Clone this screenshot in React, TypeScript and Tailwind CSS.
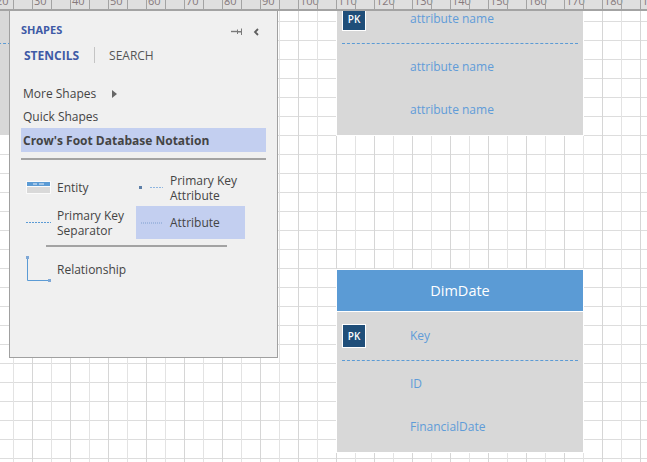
const rulerTicks = Array.from({ length: 36 }, (_, i) => i);

function Ruler() {
  return (
    <div className="absolute left-0 top-0 z-20 flex h-[11px] w-full overflow-hidden border-b-2 border-[#a3a3a3] bg-[#dfdfdf] pl-0">
      <div className="flex shrink-0 -ml-[6px]">
        {rulerTicks.map((i) => (
          <div key={i} className="relative h-[9px] w-[19px] shrink-0 border-l border-[#a3a3a3]">
            {i % 2 === 0 && (
              <span className="absolute -top-[6px] left-[1px] text-[11px] leading-[14px] text-[#86797c]">
                {20 + i * 5}
              </span>
            )}
          </div>
        ))}
      </div>
    </div>
  );
}

function PkBadge() {
  return (
    <div className="ml-[5px] flex h-[24px] w-[24px] items-center justify-center border border-white bg-[#1f4e79] text-[10px] font-semibold text-white">
      PK
    </div>
  );
}

interface EntityProps {
  className: string;
  title?: string;
  attrs: string[];
}

// one diagram node: optional header, key row, separator, then two attribute rows
function Entity({ className, title, attrs }: EntityProps) {
  return (
    <div className={`absolute w-[246px] ${className}`}>
      {title && (
        <div className="mb-[1px] flex h-[41px] items-center justify-center bg-[#5b9bd5] text-[14.5px] text-white ring-1 ring-white">
          {title}
        </div>
      )}
      <div className="bg-[#d8d8d8] pb-[5px] text-[12px] text-[#5f9cd8] ring-1 ring-white">
        <div className="flex h-[48px] items-center">
          <PkBadge />
          {attrs[0] && <span className="ml-[44px]">{attrs[0]}</span>}
        </div>
        <div className="mx-[5px] border-t border-dashed border-[#5b9bd5]" />
        <div className="flex h-[46px] items-center pl-[73px]">{attrs[1]}</div>
        <div className="flex h-[40px] items-center pl-[73px]">{attrs[2]}</div>
      </div>
    </div>
  );
}

function PinIcon() {
  return (
    <svg width="11" height="8" viewBox="0 0 11 8" className="text-[#7a7a7a]">
      <path d="M0 3.5h6" stroke="currentColor" strokeWidth="1.4" />
      <path d="M6 1.5h1V3h3V0.5h1v6.5h-1V4.5H7V6H6z" fill="currentColor" />
    </svg>
  );
}

function CollapseIcon() {
  return (
    <svg width="6" height="8" viewBox="0 0 6 8">
      <path d="M5 1L2 4l3 3" fill="none" stroke="#5f5f5f" strokeWidth="1.8" />
    </svg>
  );
}

function EntityIcon() {
  return (
    <svg width="25" height="13" viewBox="0 0 25 13">
      <rect x="0" y="0" width="25" height="13" rx="1" fill="#fbfbfb" />
      <rect x="1" y="1" width="23" height="4" fill="#5b9bd5" />
      <path d="M7 3h4M13 3h5" stroke="#e8eef8" strokeWidth="1" />
      <rect x="1" y="6" width="23" height="6" fill="#d9d9d9" />
    </svg>
  );
}

function PkAttrIcon() {
  return (
    <svg width="24" height="5" viewBox="0 0 24 5">
      <rect x="0" y="1" width="3" height="3" fill="#5d7fa8" />
      <path d="M11 2.5h13" stroke="#8fb6e0" strokeWidth="1" strokeDasharray="2 1" />
    </svg>
  );
}

function SeparatorIcon() {
  return (
    <svg width="25" height="3" viewBox="0 0 25 3">
      <path d="M0 1.5h25" stroke="#5b9bd5" strokeWidth="1" strokeDasharray="2 1" />
    </svg>
  );
}

function AttrIcon() {
  return (
    <svg width="22" height="4" viewBox="0 0 22 4">
      <path d="M0 2h22" stroke="#7f9fcf" strokeWidth="1" strokeDasharray="1 1" />
    </svg>
  );
}

function RelationshipIcon() {
  return (
    <svg width="25" height="26" viewBox="0 0 25 26">
      <path d="M1.5 1v23.5H24" fill="none" stroke="#5b9bd5" strokeWidth="1" />
      <rect x="0" y="0" width="3" height="3" fill="#7fa8d6" />
      <rect x="22" y="23" width="3" height="3" fill="#7fa8d6" />
    </svg>
  );
}

function ShapesPanel() {
  return (
    <div className="absolute left-[9px] top-[10px] z-10 h-[348px] w-[269px] border border-[#a0a0a0] bg-[#f0f0f0] px-[11px] text-[12px] leading-[15px] text-[#444444]">
      <div className="mt-[11px] flex h-[15px] items-center justify-between pr-[7px]">
        <span className="text-[11px] font-bold text-[#3e5aa6]">SHAPES</span>
        <div className="mt-[5px] flex items-center gap-[11px]">
          <PinIcon />
          <CollapseIcon />
        </div>
      </div>

      <div className="mt-[10px] flex items-center pl-[3px]">
        <span className="font-bold text-[#3e5aa6]">STENCILS</span>
        <div className="ml-[15px] mr-[14px] h-[16px] w-px bg-[#c4c4c4]" />
        <span className="text-[#555555]">SEARCH</span>
      </div>

      <div className="mt-[23px] flex items-center pl-[2px]">
        <span>More Shapes</span>
        <div className="ml-[16px] h-0 w-0 border-y-[4.5px] border-l-[5px] border-y-transparent border-l-[#666666]" />
      </div>
      <div className="mt-[8px] pl-[2px]">Quick Shapes</div>
      <div className="mt-[4px] flex h-[24px] items-center bg-[#c3cff0] pl-[2px] font-bold">
        Crow's Foot Database Notation
      </div>
      <div className="mt-[6px] border-t-2 border-[#a3a3a3]" />

      <div className="mt-[9px] grid grid-cols-[115px_109px]">
        <div className="flex h-[37px] items-center gap-[6px] pl-[5px]">
          <EntityIcon />
          <span>Entity</span>
        </div>
        <div className="flex h-[37px] items-center gap-[7px] pl-[3px]">
          <PkAttrIcon />
          <span>
            Primary Key
            <br />
            Attribute
          </span>
        </div>
        <div className="flex h-[33px] items-center gap-[6px] pl-[5px]">
          <SeparatorIcon />
          <span>
            Primary Key
            <br />
            Separator
          </span>
        </div>
        <div className="flex h-[33px] items-center gap-[7px] bg-[#c3cff0] pl-[5px]">
          <AttrIcon />
          <span>Attribute</span>
        </div>
      </div>

      <div className="ml-[25px] mt-[6px] w-[181px] border-t-2 border-[#a3a3a3]" />

      <div className="mt-[9px] flex items-center gap-[6px] pl-[5px]">
        <RelationshipIcon />
        <span>Relationship</span>
      </div>
    </div>
  );
}

export default function App() {
  return (
    <div
      className="relative h-[462px] w-[647px] overflow-hidden bg-white bg-[linear-gradient(to_right,#d6d6d6_1px,transparent_1px),linear-gradient(to_right,#e3e3e3_1px,transparent_1px),linear-gradient(to_bottom,#dddddd_1px,transparent_1px)] bg-[size:38px_100%,19px_100%,100%_19px] bg-[position:32px_0,13px_0,0_2px]"
      style={{ fontFamily: '"Open Sans", "Noto Sans", sans-serif' }}
    >
      <Ruler />
      <Entity className="-left-[230px] -top-[5px]" attrs={[]} />
      <Entity
        className="left-[337px] -top-[5px]"
        attrs={["attribute name", "attribute name", "attribute name"]}
      />
      <Entity
        className="left-[337px] top-[270px]"
        title="DimDate"
        attrs={["Key", "ID", "FinancialDate"]}
      />
      <ShapesPanel />
    </div>
  );
}
